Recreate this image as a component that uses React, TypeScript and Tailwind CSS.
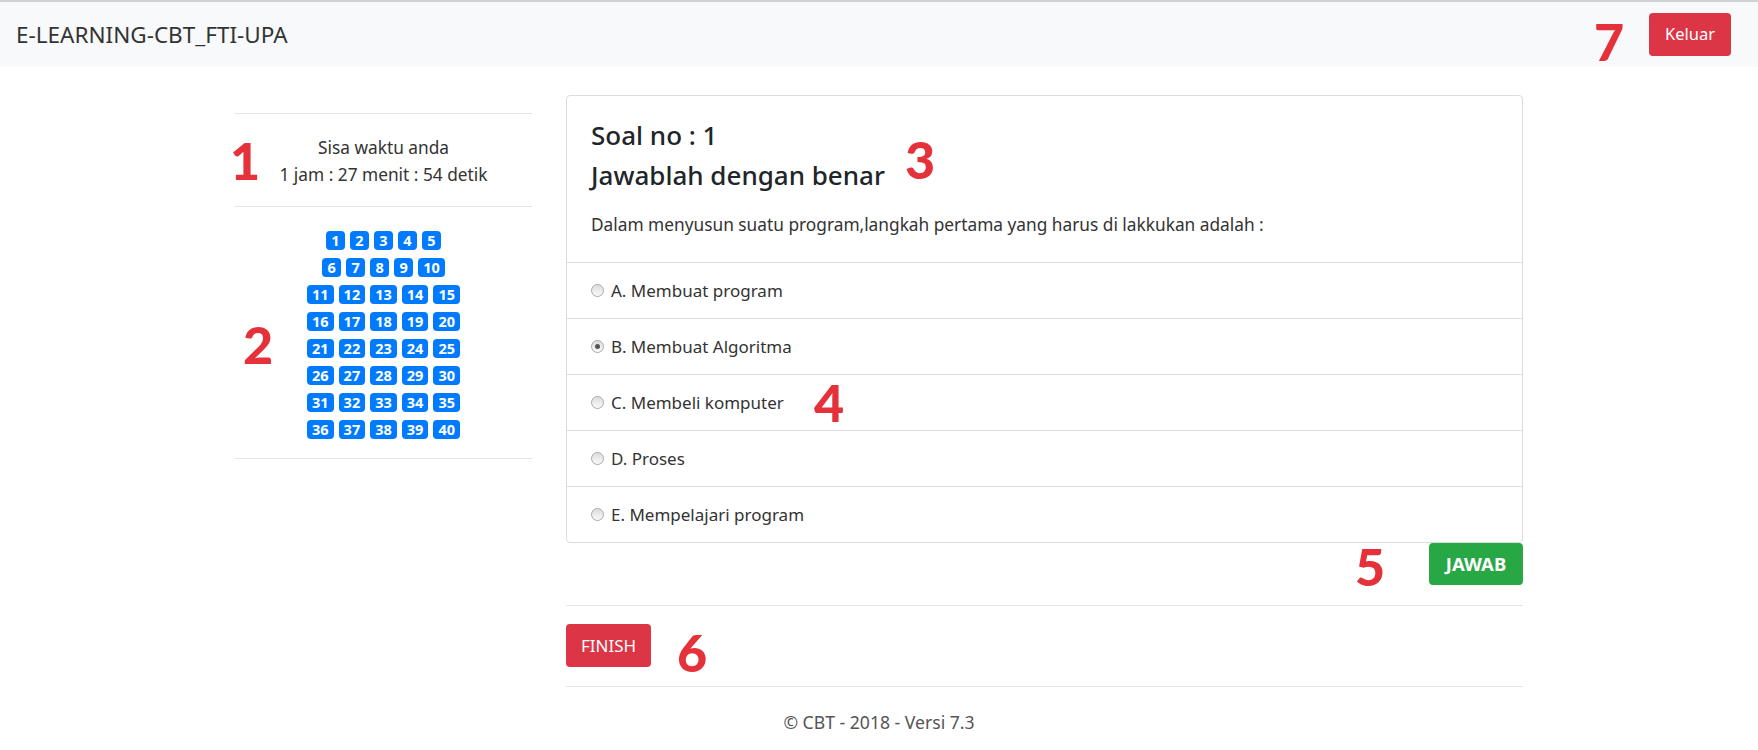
import { useState } from 'react';

const options = [
  { key: 'A', label: 'A. Membuat program' },
  { key: 'B', label: 'B. Membuat Algoritma' },
  { key: 'C', label: 'C. Membeli komputer' },
  { key: 'D', label: 'D. Proses' },
  { key: 'E', label: 'E. Mempelajari program' },
];

const rows = [
  [1, 2, 3, 4, 5],
  [6, 7, 8, 9, 10],
  [11, 12, 13, 14, 15],
  [16, 17, 18, 19, 20],
  [21, 22, 23, 24, 25],
  [26, 27, 28, 29, 30],
  [31, 32, 33, 34, 35],
  [36, 37, 38, 39, 40],
];

// red annotation numbers drawn over the screenshot
const marks = [
  { n: '1', cls: 'left-[230px] top-[134px]' },
  { n: '2', cls: 'left-[243px] top-[318px]' },
  { n: '3', cls: 'left-[905px] top-[133px]' },
  { n: '4', cls: 'left-[814px] top-[376px]' },
  { n: '5', cls: 'left-[1355px] top-[540px]' },
  { n: '6', cls: 'left-[677px] top-[626px]' },
  { n: '7', cls: 'left-[1594px] top-[15px]' },
];

function Radio({ checked }: { checked: boolean }) {
  return (
    <span className="w-[13px] h-[13px] rounded-full border border-[#a9a9a9] bg-linear-to-b from-[#dcdcdc] to-[#fbfbfb] flex items-center justify-center shrink-0">
      {checked && <span className="w-[5px] h-[5px] rounded-full bg-[#555]" />}
    </span>
  );
}

export default function App() {
  const [answer, setAnswer] = useState('B');

  return (
    <div className="relative min-h-[750px] bg-white text-[#212529] font-['Noto_Sans',sans-serif]">
      <div className="h-[67px] border-t-2 border-[#d2d2d2] bg-[#f8f9fa] flex items-center justify-between pl-[16px] pr-[27px]">
        <span className="text-[22.5px] text-[#333]">E-LEARNING-CBT_FTI-UPA</span>
        <button className="h-[43px] px-[16px] rounded-[4px] bg-[#dc3545] text-white text-[16.5px]">Keluar</button>
      </div>

      <div className="w-[1288px] mx-auto mt-[28px] flex gap-[34px] items-start">
        <div className="w-[297px] mt-[18px]">
          <div className="border-t border-[#e4e4e4] pt-[20px] pb-[18px] text-center text-[17.3px] leading-[27px] text-[#333]">
            <p>Sisa waktu anda</p>
            <p>1 jam : 27 menit : 54 detik</p>
          </div>
          <div className="border-t border-b border-[#e4e4e4] pt-[24px] pb-[19px] flex flex-col items-center gap-[8px]">
            {rows.map((row, i) => (
              <div key={i} className="flex gap-[5px]">
                {row.map((n) => (
                  <span
                    key={n}
                    className="h-[19px] min-w-[19px] px-[5px] rounded-[4px] bg-[#007bff] text-white text-[14.5px] font-bold leading-[19px] text-center"
                  >
                    {n}
                  </span>
                ))}
              </div>
            ))}
          </div>
        </div>

        <div className="w-[957px]">
          <div className="border border-[#dcdcdc] rounded-[4px]">
            <div className="px-[24px] pt-[24px] pb-[25px]">
              <h4 className="text-[26px] font-medium leading-[31px] mb-[9px]">Soal no : 1</h4>
              <h4 className="text-[26px] font-medium leading-[31px] mb-[21px]">Jawablah dengan benar</h4>
              <p className="text-[17.3px] leading-[25px] text-[#333]">
                Dalam menyusun suatu program,langkah pertama yang harus di lakkukan adalah :
              </p>
            </div>
            {options.map((o) => (
              <label
                key={o.key}
                onClick={() => setAnswer(o.key)}
                className="h-[56px] border-t border-[#dcdcdc] flex items-center gap-[7px] px-[24px] cursor-pointer"
              >
                <Radio checked={answer === o.key} />
                <span className="text-[17px] text-[#333]">{o.label}</span>
              </label>
            ))}
          </div>
          <div className="flex justify-end">
            <button className="h-[42px] w-[94px] rounded-[4px] bg-[#28a745] text-white text-[18.5px] font-bold">JAWAB</button>
          </div>
          <div className="mt-[20px] border-t border-[#e4e4e4] pt-[18px] pb-[19px]">
            <button className="h-[43px] px-[15px] rounded-[4px] bg-[#dc3545] text-white text-[17px]">FINISH</button>
          </div>
          <div className="border-t border-[#e4e4e4]" />
        </div>
      </div>

      <p className="mt-[22px] text-center text-[17.6px] leading-[26px] text-[#555]">© CBT - 2018 - Versi 7.3</p>

      {marks.map((m) => (
        <span
          key={m.n}
          className={`absolute ${m.cls} font-['Lato',sans-serif] font-black text-[52px] leading-none text-[#e5323a]`}
        >
          {m.n}
        </span>
      ))}
    </div>
  );
}
